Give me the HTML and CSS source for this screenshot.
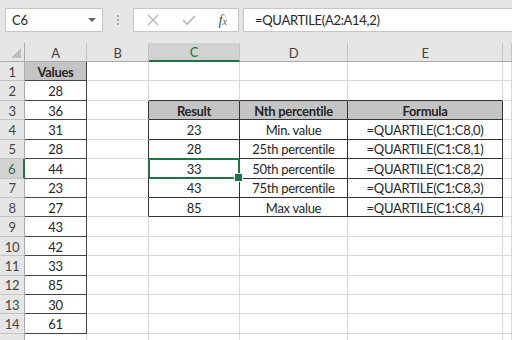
FILE: index.html
```html
<!DOCTYPE html>
<html lang="en">

<head>
  <meta charset="UTF-8">
  <meta name="viewport" content="width=device-width, initial-scale=1.0">
  <title>QUARTILE</title>
  <link rel="stylesheet" href="styles.css">
</head>

<body>
  <!-- 编辑栏 -->
  <div class="toolbar">
    <div class="namebox">
      <span>C6</span>
      <span class="arrow"></span>
    </div>
    <div class="grip"><i></i><i></i><i></i></div>
    <div class="btns">
      <svg width="14" height="14" viewBox="0 0 14 14"><path d="M2 2L12 12M12 2L2 12" stroke="#b4b4b4" stroke-width="1.3" fill="none"/></svg>
      <svg width="16" height="14" viewBox="0 0 16 14"><path d="M2 7L6 11L14 3" stroke="#b4b4b4" stroke-width="1.6" fill="none"/></svg>
      <span class="fx">f<sub>x</sub></span>
    </div>
    <div class="formula">=QUARTILE(A2:A14,2)</div>
  </div>

  <!-- 表格 -->
  <div class="sheet">
    <div class="hd corner"><span class="tri"></span></div>
    <div class="hd">A</div>
    <div class="hd">B</div>
    <div class="hd sel-col">C</div>
    <div class="hd">D</div>
    <div class="hd">E</div>
    <div class="hd"></div>

    <div class="rh">1</div>
    <div class="c ca fill bold">Values</div>
    <div class="c"></div><div class="c"></div><div class="c"></div><div class="c"></div><div class="c"></div>

    <div class="rh">2</div>
    <div class="c ca">28</div>
    <div class="c"></div><div class="c tt"></div><div class="c tt"></div><div class="c tt"></div><div class="c"></div>

    <div class="rh">3</div>
    <div class="c ca">36</div>
    <div class="c tl"></div>
    <div class="c t fill bold">Result</div>
    <div class="c t fill bold">Nth percentile</div>
    <div class="c t fill bold">Formula</div>
    <div class="c"></div>

    <div class="rh">4</div>
    <div class="c ca">31</div>
    <div class="c tl"></div>
    <div class="c t">23</div>
    <div class="c t">Min. value</div>
    <div class="c t">=QUARTILE(C1:C8,0)</div>
    <div class="c"></div>

    <div class="rh">5</div>
    <div class="c ca">28</div>
    <div class="c tl"></div>
    <div class="c t">28</div>
    <div class="c t">25th percentile</div>
    <div class="c t">=QUARTILE(C1:C8,1)</div>
    <div class="c"></div>

    <div class="rh sel-row">6</div>
    <div class="c ca">44</div>
    <div class="c tl"></div>
    <div class="c t active">33</div>
    <div class="c t">50th percentile</div>
    <div class="c t">=QUARTILE(C1:C8,2)</div>
    <div class="c"></div>

    <div class="rh">7</div>
    <div class="c ca">23</div>
    <div class="c tl"></div>
    <div class="c t">43</div>
    <div class="c t">75th percentile</div>
    <div class="c t">=QUARTILE(C1:C8,3)</div>
    <div class="c"></div>

    <div class="rh">8</div>
    <div class="c ca">27</div>
    <div class="c tl"></div>
    <div class="c t">85</div>
    <div class="c t">Max value</div>
    <div class="c t">=QUARTILE(C1:C8,4)</div>
    <div class="c"></div>

    <div class="rh">9</div>
    <div class="c ca">43</div>
    <div class="c"></div><div class="c"></div><div class="c"></div><div class="c"></div><div class="c"></div>

    <div class="rh">10</div>
    <div class="c ca">42</div>
    <div class="c"></div><div class="c"></div><div class="c"></div><div class="c"></div><div class="c"></div>

    <div class="rh">11</div>
    <div class="c ca">33</div>
    <div class="c"></div><div class="c"></div><div class="c"></div><div class="c"></div><div class="c"></div>

    <div class="rh">12</div>
    <div class="c ca">85</div>
    <div class="c"></div><div class="c"></div><div class="c"></div><div class="c"></div><div class="c"></div>

    <div class="rh">13</div>
    <div class="c ca">30</div>
    <div class="c"></div><div class="c"></div><div class="c"></div><div class="c"></div><div class="c"></div>

    <div class="rh">14</div>
    <div class="c ca">61</div>
    <div class="c"></div><div class="c"></div><div class="c"></div><div class="c"></div><div class="c"></div>

    <div class="rh"></div>
    <div class="c"></div><div class="c"></div><div class="c"></div><div class="c"></div><div class="c"></div><div class="c"></div>
  </div>
</body>

</html>
```

FILE: styles.css
```css
* {
  margin: 0;
  padding: 0;
  box-sizing: border-box;
}

body {
  width: 512px;
  height: 340px;
  overflow: hidden;
  background: #fff;
  font-family: Lato, "Liberation Sans", sans-serif;
  font-size: 13px;
  letter-spacing: -0.3px;
  color: #262626;
}

/* 编辑栏 */
.toolbar {
  height: 43px;
  background: #e6e6e6;
  display: flex;
  align-items: flex-start;
  padding-top: 8px;
  padding-left: 5px;
}

.namebox {
  width: 98px;
  height: 24px;
  background: #fff;
  border: 1px solid #c6c6c6;
  display: flex;
  align-items: center;
  justify-content: space-between;
  padding: 0 6px 0 6px;
}

.arrow {
  width: 0;
  height: 0;
  border-left: 4px solid transparent;
  border-right: 4px solid transparent;
  border-top: 4px solid #666;
}

.grip {
  width: 30px;
  height: 24px;
  display: flex;
  flex-direction: column;
  align-items: center;
  justify-content: center;
  gap: 2px;
}

.grip i {
  width: 2px;
  height: 2px;
  background: #a8a8a8;
}

.btns {
  width: 106px;
  height: 24px;
  background: #fff;
  border: 1px solid #c6c6c6;
  display: flex;
  align-items: center;
  justify-content: space-between;
  padding: 0 11px 0 12px;
}

.fx {
  font-family: "Liberation Serif", serif;
  font-style: italic;
  font-size: 15px;
  color: #555;
  letter-spacing: 0;
}

.fx sub {
  font-size: 10px;
  vertical-align: baseline;
}

.formula {
  flex: 1;
  height: 24px;
  margin-left: 4px;
  background: #fff;
  border: 1px solid #c6c6c6;
  border-right: none;
  padding-left: 11px;
  line-height: 22px;
}

/* 表格 */
.sheet {
  display: grid;
  grid-template-columns: 25px 62px 62px 91px 108px 155px 1fr;
  grid-template-rows: 19px repeat(14, 19.43px) 20px;
}

.sheet > div {
  display: flex;
  align-items: center;
  justify-content: center;
  white-space: nowrap;
  position: relative;
  padding-top: 1px;
}

.hd {
  background: #e6e6e6;
  border-right: 1px solid #c4c4c4;
  border-bottom: 1px solid #ababab;
  color: #444;
}

.corner {
  border-right-color: #ababab;
}

.tri {
  position: absolute;
  right: 3px;
  bottom: 3px;
  width: 0;
  height: 0;
  border-left: 10px solid transparent;
  border-bottom: 10px solid #bdbdbd;
}

.sel-col {
  background: #d2d2d2;
  border-bottom: 2px solid #217346;
  color: #217346;
}

.rh {
  background: #e6e6e6;
  border-right: 1px solid #ababab;
  border-bottom: 1px solid #c4c4c4;
  color: #444;
}

.sel-row {
  background: #d2d2d2;
  border-right: 2px solid #217346;
  color: #217346;
}

.c {
  border-right: 1px solid #dadada;
  border-bottom: 1px solid #dadada;
}

/* 边框 */
.ca {
  border-right-color: #444;
  border-bottom-color: #444;
}

.tl {
  border-right-color: #333;
}

.tt {
  border-bottom-color: #333;
}

.t {
  border-right-color: #333;
  border-bottom-color: #333;
}

.fill {
  background: #c4c4c4;
}

.bold {
  font-weight: bold;
}

/* 选中单元格 */
.active::before {
  content: '';
  position: absolute;
  left: -1px;
  top: -1px;
  right: -1px;
  bottom: -1px;
  border: 2px solid #217346;
}

.active::after {
  content: '';
  position: absolute;
  right: -4px;
  bottom: -4px;
  width: 7px;
  height: 7px;
  background: #217346;
  border: 1px solid #fff;
  z-index: 2;
}
```
